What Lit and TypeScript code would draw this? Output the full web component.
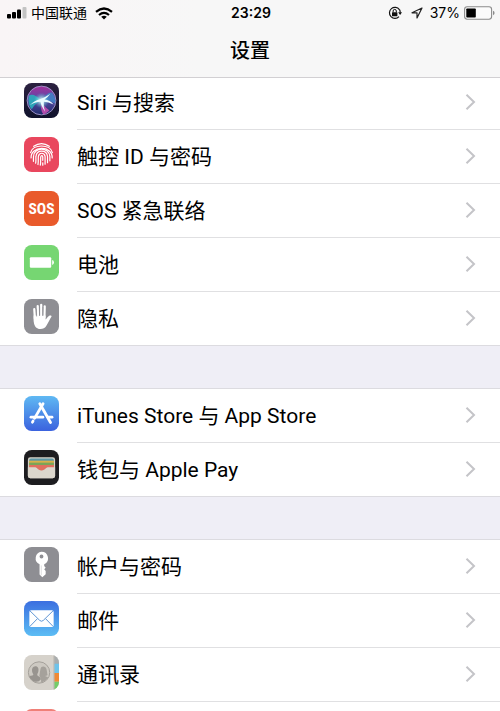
import { LitElement, html, css, svg, nothing } from "lit";
import { customElement, property } from "lit/decorators.js";

const icons: Record<string, unknown> = {
  siri: svg`
    <defs>
      <linearGradient id="siri-bg" x1="0" y1="0" x2="0" y2="1"><stop offset="0" stop-color="#2b2140"/><stop offset="1" stop-color="#10122c"/></linearGradient>
      <linearGradient id="siri-orb" x1="0.5" y1="0" x2="0.5" y2="1"><stop offset="0" stop-color="#a32f9c"/><stop offset="0.45" stop-color="#5a4aa6"/><stop offset="1" stop-color="#1f2d6c"/></linearGradient>
      <radialGradient id="siri-glow"><stop offset="0" stop-color="#fff"/><stop offset="0.35" stop-color="#b6f0f0" stop-opacity="0.7"/><stop offset="1" stop-color="#40c0d0" stop-opacity="0"/></radialGradient>
    </defs>
    <rect width="36" height="36" rx="8" fill="url(#siri-bg)"/>
    <circle cx="18" cy="18" r="14.8" fill="url(#siri-orb)" stroke="#9b8fc4" stroke-width="1"/>
    <path d="M18 18 Q10 10 5 13 Q3.4 22 8 27 Q12 20 18 18Z" fill="#27b4bd" opacity="0.85"/>
    <path d="M18 18 Q25 8 29 10 Q33 15 32 21 Q25 17 18 18Z" fill="#3f86c8" opacity="0.85"/>
    <path d="M18 18 Q16 27 20 32.4 Q25 30 26 28 Q20 24 18 18Z" fill="#c94fb4" opacity="0.85"/>
    <circle cx="18" cy="18" r="8" fill="url(#siri-glow)"/>
    <path d="M6 23 Q11 17.6 16.5 16.8 Q22 14.6 27 11 Q24 15.4 21 17 Q27 17.6 30.4 22 Q25 19.4 20.4 19.2 Q19.6 24 21.8 29.6 Q17.6 24 17 19.4 Q11 19.4 6 23Z" fill="#e9fbff"/>`,
  touch: svg`
    <rect width="36" height="36" rx="8" fill="#e9475e"/>
    <g fill="none" stroke="#fff" stroke-width="1.25" stroke-linecap="round">
      <path d="M10 9.6 Q18 4 26 9.6"/>
      <path d="M6.8 16 C9 7 27 7 29.2 16"/>
      <path d="M7.3 21.5 C6.5 9 29.5 8 29 21.5"/>
      <path d="M9.7 25 C9.8 23 9.6 22 9.8 20 C10 10 26 10 26.6 20 V24.5"/>
      <path d="M12 27 C12.6 24 12 22 12.3 20 C13 12.6 23.4 12.6 24.2 20 V26.5"/>
      <path d="M14.4 28.3 C15 25 14.5 22 14.8 20 C15.4 15.6 21 15.6 21.7 20 V28"/>
      <path d="M16.8 29 C17.4 26 17 23 17.2 20.5 C17.6 18.6 19.2 18.8 19.3 20.5 V24"/>
      <path d="M19.3 26.5 V29"/>
    </g>`,
  sos: svg`
    <rect width="36" height="36" rx="8" fill="#e95a2b"/>
    <text class="sos" x="18" y="23.5" text-anchor="middle">SOS</text>`,
  battery: svg`
    <rect width="36" height="36" rx="8" fill="#76d672"/>
    <rect x="6" y="12.5" width="22" height="11" rx="1.2" fill="#fff"/>
    <path d="M29 15.5 Q30.8 16 30.8 18 Q30.8 20 29 20.5Z" fill="#fff"/>`,
  privacy: svg`
    <rect width="36" height="36" rx="8" fill="#8e8e93"/>
    <g stroke="#fff" stroke-width="2.3" stroke-linecap="round" fill="none">
      <path d="M10.6 10.5 L11.2 20"/><path d="M14.1 7.2 L14.4 19"/><path d="M17.7 6 V19"/><path d="M21.3 7.6 L21 19"/>
    </g>
    <path d="M9.9 17 H22.2 V21.2 C23.6 19.8 24.8 17.6 26.4 17 C27.8 16.6 28.8 17.3 28.2 18.3 C26.4 20.5 25.2 24.4 23 27.6 C20.8 31.8 13.6 32 11.4 28 C9.8 25.2 9.6 21 9.9 17Z" fill="#fff"/>
    <g stroke="#8e8e93" stroke-width="0.7"><path d="M12.7 10 L13 18"/><path d="M16 8 V17.5"/><path d="M19.5 8 L19.3 17.5"/></g>`,
  store: svg`
    <defs><linearGradient id="store-bg" x1="0" y1="0" x2="0" y2="1"><stop offset="0" stop-color="#5fb9f3"/><stop offset="1" stop-color="#3b62de"/></linearGradient></defs>
    <rect width="36" height="36" rx="8" fill="url(#store-bg)"/>
    <g stroke="#fff" stroke-width="2.9" stroke-linecap="round" fill="none">
      <path d="M19.6 8 L10.8 23"/><path d="M9.3 25.8 L8.7 26.9"/>
      <path d="M16.3 8 L27.3 27.2"/>
      <path d="M7.2 21.8 H19.4"/><path d="M24.6 21.8 H28.8"/>
    </g>`,
  wallet: svg`
    <rect width="36" height="36" rx="8" fill="#1d1d20"/>
    <rect x="4" y="7.5" width="28" height="21.5" rx="2.4" fill="#d8d3c8"/>
    <path d="M5.2 11 Q5.2 8.8 7 8.8 H29 Q30.8 8.8 30.8 11 V12 H5.2Z" fill="#5c98a8"/>
    <rect x="5.2" y="11" width="25.6" height="2.4" fill="#d9b04a"/>
    <rect x="5.2" y="13" width="25.6" height="2.8" fill="#79a658"/>
    <rect x="5.2" y="15.4" width="25.6" height="3.6" fill="#e0705f"/>
    <path d="M4 17.8 H12 C14 17.8 13.6 21 18 21 C22.4 21 22 17.8 24 17.8 H32 V26.6 Q32 29 29.6 29 H6.4 Q4 29 4 26.6Z" fill="#dcd7cd"/>
    <path d="M11.6 17.6 C14 17.6 13.6 21 18 21 C22.4 21 22 17.6 24.4 17.6Z" fill="#e0705f"/>`,
  key: svg`
    <rect width="36" height="36" rx="8" fill="#8e8e93"/>
    <path fill-rule="evenodd" fill="#fff" d="M18 5 A6.7 6.7 0 0 1 20.8 17.8 V19.6 L22.3 21.3 L20.8 23 L22.3 24.8 V28 L18.8 31 L16 28.4 V17.8 A6.7 6.7 0 0 1 18 5Z M18 7.7 A2 2 0 1 0 18 11.7 A2 2 0 1 0 18 7.7Z"/>
    <path d="M17.8 19 V29" stroke="#c9c9cc" stroke-width="0.6"/>`,
  mail: svg`
    <defs><linearGradient id="mail-bg" x1="0" y1="0" x2="0" y2="1"><stop offset="0" stop-color="#3b6fe0"/><stop offset="1" stop-color="#5cbdf4"/></linearGradient></defs>
    <rect width="36" height="36" rx="8" fill="url(#mail-bg)"/>
    <rect x="5.5" y="9.5" width="25" height="17.2" rx="1.8" fill="#fff"/>
    <g fill="none" stroke="#5b93d4" stroke-width="1"><path d="M6.2 10.2 L16.2 20 Q18 21.6 19.8 20 L29.8 10.2"/><path d="M6.2 26 L13.8 18.2"/><path d="M29.8 26 L22.2 18.2"/></g>`,
  contacts: svg`
    <defs><clipPath id="contacts-clip"><rect width="36" height="36" rx="8"/></clipPath></defs>
    <g clip-path="url(#contacts-clip)">
      <rect width="36" height="36" fill="#d6d2cb"/>
      <rect x="31" width="5" height="10" fill="#a9adae"/>
      <rect x="31" y="9" width="5" height="9.5" fill="#6ec3ea"/>
      <rect x="31" y="18.5" width="5" height="9" fill="#f08a35"/>
      <rect x="31" y="27.5" width="5" height="9" fill="#74cc6a"/>
      <rect x="30.3" width="1" height="36" fill="#bab6af"/>
    </g>
    <circle cx="15.5" cy="18" r="11" fill="#cdc9c2" stroke="#a39f99" stroke-width="1"/>
    <path d="M11.6 11.5 C14.6 11.5 15.3 14 14.8 16.8 C14.4 18.6 13.6 19.5 13.6 20.6 C14 22 17 22 17.4 25 Q15 28.4 11 27.4 Q6.4 25.6 5.4 21.6 C8 21 9.4 21.6 9.6 20.4 C9.5 19.4 8.6 18.6 8.3 16.8 C7.9 13.8 9 11.5 11.6 11.5Z" fill="#98948f"/>
    <path d="M19.8 11.8 C23.6 11.8 23.4 16 24.2 20.6 C23.4 21.4 22 21.2 22 21.8 L24.8 23 Q22 27.6 17.6 28 C18 25 16.6 23 15.8 21.4 C17 15 16.6 11.8 19.8 11.8Z" fill="#a5a19b"/>`,
  calendar: svg`<rect width="36" height="36" rx="8" fill="#f08078"/>`,
};

interface Item {
  icon: string;
  label?: string;
}

const groups: Item[][] = [
  [
    { icon: "siri", label: "Siri 与搜索" },
    { icon: "touch", label: "触控 ID 与密码" },
    { icon: "sos", label: "SOS 紧急联络" },
    { icon: "battery", label: "电池" },
    { icon: "privacy", label: "隐私" },
  ],
  [
    { icon: "store", label: "iTunes Store 与 App Store" },
    { icon: "wallet", label: "钱包与 Apple Pay" },
  ],
  [
    { icon: "key", label: "帐户与密码" },
    { icon: "mail", label: "邮件" },
    { icon: "contacts", label: "通讯录" },
    { icon: "calendar" },
  ],
];

@customElement("status-bar")
class StatusBar extends LitElement {
  static styles = css`
    :host {
      display: grid;
      grid-template-columns: 1fr auto 1fr;
      align-items: center;
      height: 26px;
      padding: 0 5px 0 7px;
      font-family: Inter, "Noto Sans CJK SC", sans-serif;
      font-size: 14px;
      line-height: 20px;
    }
    .side { display: flex; align-items: center; }
    .start { gap: 4px; }
    .end { justify-content: flex-end; gap: 4px; }
    .wifi { margin-left: 4px; }
    .glyphs { display: flex; align-items: center; gap: 9px; margin-right: 3px; }
    .time { font-weight: 600; }
    svg { display: block; }
  `;

  render() {
    return html`
      <div class="side start">
        <svg width="20" height="12" viewBox="0 0 20 12" aria-hidden="true">
          <rect y="7" width="4" height="4.5" rx="1"/>
          <rect x="5" y="5" width="4" height="6.5" rx="1"/>
          <rect x="10" y="2.5" width="4" height="9" rx="1"/>
          <rect x="15.5" width="4" height="11.5" rx="1" fill="#c3c3c3"/>
        </svg>
        <span>中国联通</span>
        <svg class="wifi" width="18" height="13" viewBox="0 0 18 13" aria-hidden="true">
          <g fill="none" stroke="#000" stroke-width="2.2"><path d="M1 4.9 Q9 -1.9 17 4.9"/><path d="M4 8 Q9 3.8 14 8"/></g>
          <path d="M6.2 9.8 Q9 7.6 11.8 9.8 L9 12.6Z"/>
        </svg>
      </div>
      <span class="time">23:29</span>
      <div class="side end">
        <div class="glyphs">
          <svg width="14" height="14" viewBox="0 0 14 14" aria-hidden="true">
            <path d="M11.4 3.6 A5.5 5.5 0 1 0 11 10.6" fill="none" stroke="#111" stroke-width="1.2"/>
            <path d="M11.4 3.4 A5.5 5.5 0 0 1 12.2 6.6" fill="none" stroke="#111" stroke-width="1.2"/>
            <path d="M10.2 6.3 H14 L12.1 9Z" fill="#111"/>
            <rect x="4" y="6.2" width="5.4" height="4" rx="0.5" fill="#111"/>
            <path d="M5.1 6.4 V5 A1.6 1.6 0 0 1 8.3 5 V6.4" fill="none" stroke="#111" stroke-width="1"/>
          </svg>
          <svg width="12" height="12" viewBox="0 0 12 12" aria-hidden="true">
            <path d="M11 1 L1 5.8 H6 V11Z" fill="none" stroke="#222" stroke-width="1.2" stroke-linejoin="round"/>
          </svg>
        </div>
        <span>37%</span>
        <svg width="31" height="14" viewBox="0 0 31 14" aria-hidden="true">
          <rect x="0.6" y="0.8" width="27" height="12.4" rx="2.6" fill="#fbfbfb" stroke="#8b8b8b" stroke-width="1.1"/>
          <rect x="2.3" y="2.5" width="9.5" height="9" rx="0.8"/>
          <path d="M29 4.8 Q30.6 5.4 30.6 7 Q30.6 8.6 29 9.2Z" fill="#8b8b8b"/>
        </svg>
      </div>
    `;
  }
}

@customElement("settings-row")
class SettingsRow extends LitElement {
  @property() icon = "";
  @property() label?: string;

  static styles = css`
    :host { display: block; }
    .row {
      display: flex;
      height: 54px;
      padding-left: 24px;
      gap: 18px;
      color: #000;
      text-decoration: none;
    }
    .icon { flex: none; display: block; width: 35px; height: 35px; margin-top: 7px; }
    .sos { font: bold 16px "Liberation Sans Narrow", "Roboto Condensed", Roboto, sans-serif; fill: #fff; }
    .body {
      flex: 1;
      display: flex;
      align-items: center;
      justify-content: space-between;
      padding-right: 24px;
      border-bottom: 1px solid #e0e0e2;
    }
    :host([last]) .body { border-bottom-color: transparent; }
    .label { font-size: 21px; line-height: 28px; white-space: nowrap; }
    .chevron { display: block; margin-bottom: 2px; }
  `;

  render() {
    return html`
      <a class="row" href="#${this.icon}">
        <svg class="icon" viewBox="0 0 36 36" aria-hidden="true">${icons[this.icon]}</svg>
        <span class="body">
          <span class="label">${this.label ?? nothing}</span>
          <svg class="chevron" width="11" height="18" viewBox="0 0 11 18" aria-hidden="true">
            <path d="M1.5 1.8 L9 9 L1.5 16.2" fill="none" stroke="#c4c4c8" stroke-width="2"/>
          </svg>
        </span>
      </a>
    `;
  }
}

@customElement("app-root")
class AppRoot extends LitElement {
  static styles = css`
    :host {
      display: flex;
      flex-direction: column;
      height: 100vh;
      overflow: hidden;
      background: #efeef6;
      color: #000;
      font-family: Roboto, "Noto Sans CJK SC", sans-serif;
    }
    .header {
      flex: none;
      z-index: 1;
      background: linear-gradient(90deg, #f9f5f6, #f7f7f7 40%);
      border-bottom: 1px solid #d2d0d3;
    }
    .title {
      margin: 0;
      padding: 11px 0 12px;
      text-align: center;
      font-size: 20px;
      line-height: 28px;
      font-weight: 500;
    }
    .list {
      flex: 1;
      min-height: 0;
      overflow: hidden;
      display: flex;
      flex-direction: column;
      gap: 42px;
      margin-top: -3px;
    }
    .group {
      flex: none;
      background: #fff;
      border-top: 1px solid #dcdbe0;
      box-shadow: inset 0 -1px #dcdbe0;
    }
  `;

  render() {
    return html`
      <header class="header">
        <status-bar></status-bar>
        <h1 class="title">设置</h1>
      </header>
      <main class="list">
        ${groups.map(
          (group) => html`<section class="group">
            ${group.map(
              (item, i) => html`<settings-row
                .icon=${item.icon}
                .label=${item.label}
                ?last=${i === group.length - 1}
              ></settings-row>`,
            )}
          </section>`,
        )}
      </main>
    `;
  }
}
